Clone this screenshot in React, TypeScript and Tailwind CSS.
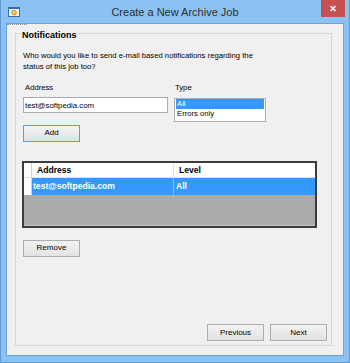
import clsx from "clsx";

function WinButton({
  children,
  focused,
}: {
  children: React.ReactNode;
  focused?: boolean;
}) {
  return (
    <button
      className={clsx(
        "h-[17px] w-[57px] shrink-0 border bg-linear-to-b from-[#f3f3f3] to-[#e2e2e2] text-[8px] leading-none text-black",
        focused ? "border-[#5a9fe2]" : "border-[#adadad]",
      )}
    >
      {children}
    </button>
  );
}

function AppIcon() {
  return (
    <svg width="12" height="10" viewBox="0 0 12 10">
      <rect x="0" y="0" width="12" height="10" fill="#2f6fb5" />
      <rect x="1" y="2" width="10" height="7" fill="#eef4fb" />
      <circle cx="6" cy="5.6" r="2.8" fill="#f0a020" />
      <path d="M4.4 4.8 L6 6.8 L7.6 4.8 Z" fill="#fff6dc" />
    </svg>
  );
}

export default function App() {
  return (
    <div className="flex h-[363px] w-[350px] flex-col border-x border-b border-[#5f9ad4] bg-[#8cc2f1] font-['Liberation_Sans',Arial,sans-serif] text-black">
      {/* title bar */}
      <div className="grid h-[23px] shrink-0 grid-cols-[1fr_auto_1fr]">
        <div className="pl-[7px] pt-[7px]">
          <AppIcon />
        </div>
        <div className="pt-[1px] text-[11px] leading-[22px] text-[#2e2e2e]">
          Create a New Archive Job
        </div>
        <div className="flex justify-end pr-[4px]">
          <div className="flex h-[17px] w-[24px] items-center justify-center bg-[#c75050]">
            <svg width="24" height="17" viewBox="0 0 24 17">
              <path
                d="M9.5 6 L14.5 11 M14.5 6 L9.5 11"
                stroke="#fff"
                strokeWidth="1.6"
              />
            </svg>
          </div>
        </div>
      </div>

      {/* client area */}
      <div className="mx-[5px] mb-[6px] flex flex-1 flex-col border border-[#6aa4dc] bg-[#f0f0f0]">
        <div className="h-0 w-[20px] border-t border-dotted border-[#8a8a8a]" />

        <div className="mt-[8px] mb-[9px] ml-[8px] mr-[11px] flex flex-1 flex-col border border-[#d6d6d6] pb-[4px] pl-[7px] pr-[4px]">
          <div className="-mt-[5px] -ml-[2px] self-start bg-[#f0f0f0] px-[1px] pt-[1px] text-[9px] font-bold leading-[10px]">
            Notifications
          </div>

          <p className="mt-[10px] whitespace-nowrap text-[7.7px] leading-[11px]">
            Who would you like to send e-mail based notifications regarding the
            <br />
            status of this job too?
          </p>

          <div className="mt-[10px] flex items-start">
            <div className="flex w-[145px] flex-col items-start">
              <span className="pl-[2px] text-[7.7px] leading-[11px]">Address</span>
              <input
                readOnly
                value="test@softpedia.com"
                className="mt-[4px] h-[16px] w-full border border-[#abadb3] bg-white px-[1px] text-[7.8px] outline-none"
              />
              <div className="mt-[5px]">
                <WinButton focused>Add</WinButton>
              </div>
            </div>

            <div className="ml-[6px] flex w-[92px] flex-col">
              <span className="pl-[1px] text-[7.7px] leading-[11px]">Type</span>
              <div className="mt-[5px] h-[24px] border border-[#abadb3] bg-white px-px text-[7.7px] leading-[10px]">
                <div className="h-[10px] bg-[#3399ff] pl-[1px] text-white">All</div>
                <div className="h-[10px] pl-[1px]">Errors only</div>
              </div>
            </div>
          </div>

          {/* grid */}
          <div className="mt-[19px] -ml-[1px] flex h-[67px] w-[295px] flex-col border-2 border-[#3c3c3c] bg-[#ababab]">
            <div className="flex h-[15px] border-b border-[#e1e1e1] bg-white text-[8.6px] font-bold">
              <div className="w-[8px] border-r border-[#d2d2d2]" />
              <div className="flex w-[142px] items-center border-r border-[#e1e1e1] pl-[5px]">
                Address
              </div>
              <div className="flex flex-1 items-center pl-[5px]">Level</div>
            </div>
            <div className="flex h-[17px] text-[8.6px] font-bold text-white">
              <div className="w-[8px] border-r border-[#d2d2d2] bg-white" />
              <div className="flex w-[142px] items-center border-r border-[#8fc1f2] bg-[#3399ff] pl-[1px]">
                test@softpedia.com
              </div>
              <div className="flex flex-1 items-center bg-[#3399ff] pl-[2px]">All</div>
            </div>
            <div className="flex-1 border-b border-[#c4c4c4]" />
          </div>

          <div className="mt-[5px]">
            <WinButton>Remove</WinButton>
          </div>

          <div className="mt-auto flex justify-end gap-[6px]">
            <WinButton>Previous</WinButton>
            <WinButton>Next</WinButton>
          </div>
        </div>
      </div>
    </div>
  );
}
